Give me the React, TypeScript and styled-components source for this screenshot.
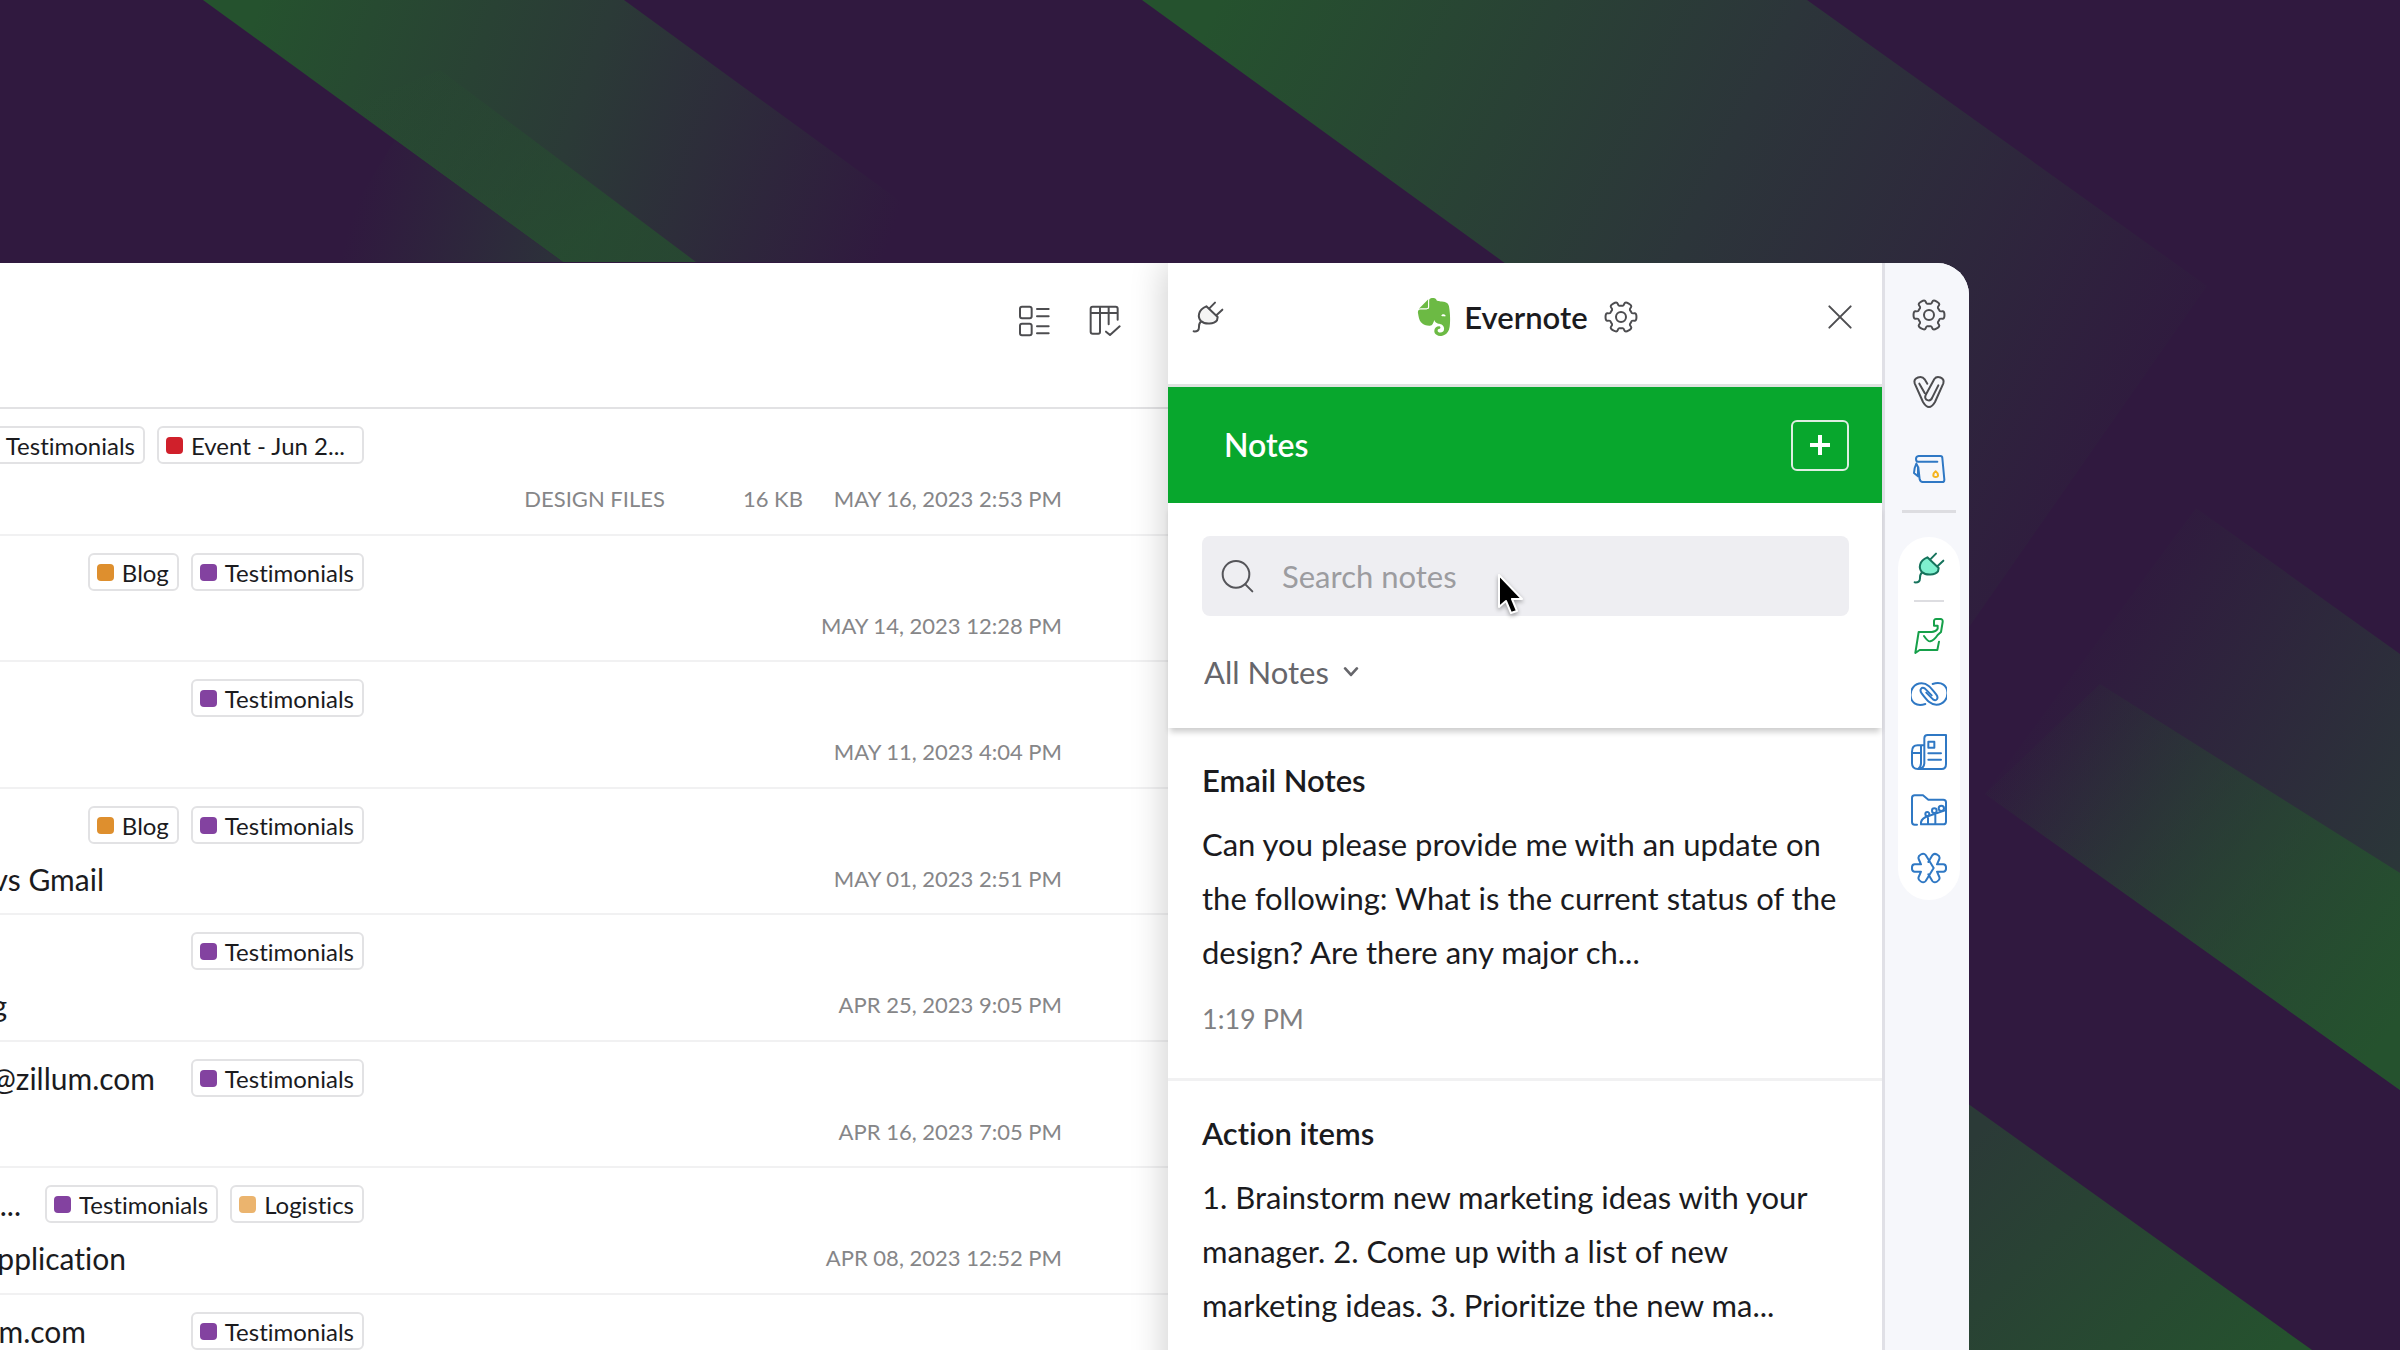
import React from 'react';
import styled, { createGlobalStyle } from 'styled-components';
import { SiEvernote } from 'react-icons/si';

const GlobalStyle = createGlobalStyle`
  *, *::before, *::after { box-sizing: border-box; }
  body {
    margin: 0;
    background: #30193f;
    font-variant-ligatures: none;
  }
  body, button, input, select {
    font-family: Lato, "Open Sans", sans-serif;
  }
`;

/* ---------- page frame ---------- */

const Page = styled.div`
  position: relative;
  height: 100vh;
  display: flex;
  padding: 263px 431px 0 0;
  overflow: hidden;
  color: #1b1b1e;
`;

const Backdrop = styled.svg`
  position: absolute;
  inset: 0;
  width: 100%;
  height: 100%;
`;

const AppWindow = styled.main`
  position: relative;
  flex: 1;
  min-width: 0;
  display: grid;
  grid-template-columns: minmax(0, 1fr) 714px 87px;
  background: #fff;
  border-top-right-radius: 32px;
  overflow: hidden;
`;

const IconButton = styled.button`
  display: flex;
  align-items: center;
  justify-content: center;
  padding: 0;
  border: 0;
  background: none;
  color: #4d4d50;
  cursor: pointer;
`;

const Glyph = styled.svg`
  display: block;
  flex: none;
  fill: none;
  stroke: currentColor;
  stroke-width: 6px;
  stroke-linecap: round;
  stroke-linejoin: round;
`;

/* ---------- mail list ---------- */

const MailPane = styled.section`
  display: flex;
  flex-direction: column;
  min-width: 0;
`;

const MailToolbar = styled.header`
  display: flex;
  justify-content: flex-end;
  align-items: flex-start;
  gap: 35px;
  height: 146px;
  padding: 40px 45px 0 0;
  border-bottom: 2px solid #e2e2e4;
`;

const MailList = styled.ul`
  margin: 0;
  padding: 0;
  list-style: none;
`;

const MailRow = styled.li`
  display: flex;
  flex-direction: column;
  gap: 16px;
  height: 127px;
  padding-top: 17px;
  border-bottom: 2px solid #f1f1f2;

  &:nth-child(even) { height: 126px; }
`;

const MailLine = styled.div`
  display: flex;
  align-items: center;
  justify-content: space-between;
  height: 38px;
`;

const LabelLine = styled(MailLine)`
  width: 364px;
`;

const MailText = styled.span<{ $end?: number }>`
  display: flex;
  flex: none;
  justify-content: flex-end;
  width: ${(p) => p.$end ?? 0}px;
  white-space: nowrap;
  font-size: 30px;
  line-height: 38px;
`;

const Labels = styled.div`
  display: flex;
  flex: 1;
  justify-content: flex-end;
  gap: 12px;
  min-width: 0;
`;

const Label = styled.span`
  display: flex;
  flex: none;
  align-items: center;
  gap: 8px;
  height: 38px;
  padding: 0 8px 0 7px;
  border: 2px solid #e2e2e4;
  border-radius: 6px;
  white-space: nowrap;
  font-size: 24px;
`;

const WideLabel = styled(Label)`
  padding-right: 17px;
`;

const Swatch = styled.i<{ $color: string }>`
  width: 17px;
  height: 17px;
  border-radius: 4px;
  background: ${(p) => p.$color};
`;

const Meta = styled.div`
  display: flex;
  justify-content: flex-end;
  padding-right: 106px;
  white-space: nowrap;
  font-size: 22px;
  line-height: 38px;
  color: #868688;
`;

const Folder = styled.span`
  margin-right: 78px;
`;

const Size = styled.span`
  margin-right: 31px;
`;

/* ---------- notes panel ---------- */

const Panel = styled.aside`
  display: flex;
  flex-direction: column;
  min-width: 0;
  background: #fff;
  box-shadow: -4px 0 32px rgba(0, 0, 0, 0.18);
`;

const PanelHeader = styled.header`
  display: flex;
  align-items: center;
  justify-content: space-between;
  height: 124px;
  padding: 0 24px 13px 22px;
  border-bottom: 3px solid #dfe3e0;
`;

const PanelTitle = styled.div`
  display: flex;
  align-items: center;
  gap: 11px;
  padding-left: 6px;
`;

const AppName = styled.h1`
  margin: 0;
  padding-right: 4px;
  font-size: 31px;
  font-weight: 600;
  line-height: 40px;
`;

const NotesBar = styled.div`
  display: flex;
  align-items: center;
  justify-content: space-between;
  height: 116px;
  padding: 0 33px 0 56px;
  background: #08a72d;
  color: #fff;
`;

const BarTitle = styled.h2`
  margin: 0;
  font-size: 32px;
  font-weight: 600;
  line-height: 40px;
`;

const AddButton = styled(IconButton)`
  width: 58px;
  height: 51px;
  border: 2px solid #dfeee2;
  border-radius: 6px;
  color: #fff;
`;

const Filters = styled.div`
  position: relative;
  display: flex;
  flex-direction: column;
  align-items: flex-start;
  gap: 36px;
  height: 225px;
  padding: 33px 33px 0 34px;
  background: #fff;
  box-shadow: 0 6px 6px -2px rgba(0, 0, 0, 0.2);
`;

const SearchBox = styled.label`
  position: relative;
  display: flex;
  align-items: center;
  gap: 26px;
  width: 100%;
  height: 80px;
  padding: 0 18px;
  border-radius: 8px;
  background: #eeeef2;
  color: #55555a;
`;

const SearchInput = styled.input`
  flex: 1;
  min-width: 0;
  padding: 0;
  border: 0;
  outline: 0;
  background: none;
  font-size: 31px;
  line-height: 40px;
  color: #1b1b1e;

  &::placeholder { color: #9c9ca0; opacity: 1; }
`;

const Pointer = styled.svg`
  position: absolute;
  left: 294px;
  top: 37px;
  width: 30px;
  height: 44px;
  filter: drop-shadow(0 2px 2px rgba(0, 0, 0, 0.35));
`;

const FilterSelect = styled.label`
  display: flex;
  align-items: center;
  gap: 12px;
  color: #66666b;
`;

const Select = styled.select`
  appearance: none;
  field-sizing: content;
  padding: 0 2px;
  border: 0;
  background: none;
  font-size: 31px;
  line-height: 40px;
  color: inherit;
`;

const Note = styled.article`
  padding: 32px 34px 41px;
  border-bottom: 3px solid #f1f1f2;
`;

const NoteTitle = styled.h3`
  margin: 0 0 17px;
  font-size: 31px;
  font-weight: 600;
  line-height: 40px;
`;

const NoteText = styled.p`
  margin: 0;
  font-size: 31px;
  line-height: 54px;
`;

const NoteTime = styled.time`
  display: block;
  margin-top: 22px;
  font-size: 27px;
  line-height: 36px;
  color: #7f7f82;
`;

/* ---------- app rail ---------- */

const Rail = styled.nav`
  display: flex;
  flex-direction: column;
  align-items: center;
  padding: 34px 0 0 4px;
  border-left: 3px solid #e0e0e6;
  background: #f6f7fb;
`;

const RailGroup = styled.div`
  display: flex;
  flex-direction: column;
  gap: 41px;
`;

const RailRule = styled.hr<{ $width: number }>`
  width: ${(p) => p.$width}px;
  height: ${(p) => (p.$width > 40 ? 3 : 2)}px;
  margin: 0;
  border: 0;
  background: #dddde1;
`;

const RailButton = styled(IconButton)<{ $color?: string }>`
  width: 40px;
  height: 36px;
  color: ${(p) => p.$color ?? '#4d4d50'};
`;

const Pill = styled.div`
  display: flex;
  flex-direction: column;
  align-items: center;
  width: 62px;
  margin-top: 24px;
  padding: 13px 0 14px;
  border-radius: 31px;
  background: #fff;
`;

const RailTop = styled(RailGroup)`
  margin-bottom: 23px;
`;

const PillGroup = styled(RailGroup)`
  gap: 22px;
  margin-top: 16px;
`;

const PlugSlot = styled.div`
  margin-bottom: 14px;
`;

/* ---------- icons, drawn around a centre of 0,0 ---------- */

const Icon = ({ size = 36, children }: { size?: number; children: React.ReactNode }) => (
  <Glyph width={size} height={size} viewBox="-54 -54 108 108" aria-hidden="true">
    {children}
  </Glyph>
);

const gearPath = (() => {
  const pts: [number, number][] = [];
  for (let k = 0; k < 6; k++) {
    [[34, -24], [35, -17], [48, -15], [48, 15], [35, 17], [34, 24]].forEach(([r, a]) => {
      const t = ((k * 60 + a) * Math.PI) / 180;
      pts.push([r * Math.cos(t), r * Math.sin(t)]);
    });
  }
  const mid = (a: number[], b: number[]) =>
    `${((a[0] + b[0]) / 2).toFixed(1)} ${((a[1] + b[1]) / 2).toFixed(1)}`;
  let d = `M${mid(pts[pts.length - 1], pts[0])}`;
  pts.forEach((p, i) => {
    d += ` Q${p[0].toFixed(1)} ${p[1].toFixed(1)} ${mid(p, pts[(i + 1) % pts.length])}`;
  });
  return `${d}Z`;
})();

const Gear = () => (
  <Icon>
    <path d={gearPath} />
    <circle r="15" />
  </Icon>
);

const Plug = ({ fill = '#f4f4f4' }: { fill?: string }) => (
  <Icon>
    <path d="M-43 43C-32 44-27 40-27 31C-27 22-28 18-20 13" />
    <path fill={fill} d="M-5-32C-30-22-32 0-21 12C-8 24 18 21 27 10L29 0Z" />
    <path d="M4-26L21-43M26-6L43-22" />
  </Icon>
);

const Vee = () => (
  <Icon>
    <path d="M-5-25L-13-38C-22-51-48-44-43-26L-18 30Q0 60 18 30L43-26C48-44 24-50 16-39L-10 9C-17 25 4 32 10 16L28-20M-29-25L-13 3" />
  </Icon>
);

const Wallet = () => (
  <Icon>
    <path d="M25-22H-33Q-39-22-39-30T-31-39H34Q40-39 40-33L46 32Q46 39 40 39H-19Q-26 39-28 31L-32-5M-38-16Q-45-2-45 12L-33 22V-6Z" />
    <path stroke="#f5b41f" d="M20 7C10 15 11 24 20 24C29 24 30 15 20 7Z" />
  </Icon>
);

const PhoneBag = () => (
  <Icon>
    <path d="M-15 0C-7 12-1 17 4 16C14 14 20 6 26-3L36-12L41-42Q42-51 34-51H22Q14-51 15-42V-31H26V-22Q20-12 8-12H-31L-41 51L-28 42H25L30 17" />
  </Icon>
);

const Rings = () => (
  <Icon>
    <path d="M-11 30C-68 48-68-32-22-32C-6-32 4-22 22 2C30 13 22 23 12 16L-8-4" />
    <path d="M11-30C68-48 68 32 22 32C6 32-4 22-22-2C-30-13-22-23-12-16L8 4" />
  </Icon>
);

const News = () => (
  <Icon>
    <path d="M-14-41Q-14-51-4-51H51V36Q51 51 38 51H-33Q-51 51-51 34V-1Q-51-20-34-20H-16M-14-41V34Q-15 50-33 51Q-24 46-24 34V-20M-51 3H-24" />
    <path d="M-2-31H16V-13H-2ZM-2 4H36M-2 23H36" />
  </Icon>
);

const FolderChart = () => (
  <Icon>
    <path d="M-36 44H-43Q-51 44-51 36V-36Q-51-44-43-44H-18L-2-31H43Q51-31 51-23V35Q51 43 43 43H-24Q-26 29-10 21L48 1M-3 24V43M19 16V43" />
    <circle cx="-5" cy="12" r="6" />
    <circle cx="16" cy="2" r="7" />
    <circle cx="37" cy="-5" r="8" />
  </Icon>
);

const Asterisk = () => (
  <Icon>
    <path d="M14 0L-10-39C-17-48-35-38-31-27L-24-11H-43C-54-11-54 11-43 11H-24L-31 27C-35 38-17 48-10 39L14 0" />
    <path d="M-2-18L10-38C17-48 35-38 31-27L24-11H43C54-11 54 11 43 11H24L31 27C35 38 17 48 10 39L-2 19" />
  </Icon>
);

const Cross = () => (
  <Icon>
    <path d="M-32-32L32 32M32-32L-32 32" />
  </Icon>
);

const ListView = () => (
  <Icon>
    <rect x="-42" y="-43" width="35" height="35" rx="6" />
    <rect x="-42" y="8" width="35" height="35" rx="6" />
    <path d="M9-36H44M9-14H44M9 16H44M9 37H44" />
  </Icon>
);

const TableCheck = () => (
  <Icon>
    <path d="M38-4V-37Q38-43 32-43H-37Q-43-43-43-37V32Q-43 38-37 38H-20Q-15 38-15 32V-43M-43-24H38M11-43V10M3 32L15 42L44 16" />
  </Icon>
);

const Magnifier = () => (
  <Icon>
    <circle cx="-6" cy="-5" r="40" />
    <path d="M22 25L43 46" />
  </Icon>
);

const PlusSign = () => (
  <Glyph width="20" height="20" viewBox="0 0 20 20" aria-hidden="true">
    <path strokeWidth="4" strokeLinecap="butt" d="M10 0V20M0 10H20" />
  </Glyph>
);

const Chevron = () => (
  <Glyph width="16" height="10" viewBox="-3 -3 54 34" aria-hidden="true">
    <path strokeWidth="9" d="M4 2L24 24L44 2" />
  </Glyph>
);

/* ---------- data ---------- */

const BLUE = '#2f78c4';
const testimonials = { text: 'Testimonials', color: '#8342a0' };
const blog = { text: 'Blog', color: '#de8f2e' };

type Mail = {
  labels: { text: string; color: string; wide?: boolean }[];
  date: string;
  from?: string;
  fromEnd?: number;
  subject?: string;
  subjectEnd?: number;
  folder?: string;
  size?: string;
};

const mails: Mail[] = [
  {
    labels: [testimonials, { text: 'Event - Jun 2...', color: '#d0202b', wide: true }],
    date: 'MAY 16, 2023 2:53 PM',
    folder: 'DESIGN FILES',
    size: '16 KB',
  },
  { labels: [blog, testimonials], date: 'MAY 14, 2023 12:28 PM' },
  { labels: [testimonials], date: 'MAY 11, 2023 4:04 PM' },
  { labels: [blog, testimonials], date: 'MAY 01, 2023 2:51 PM', subject: 'vs Gmail', subjectEnd: 104 },
  { labels: [testimonials], date: 'APR 25, 2023 9:05 PM', subject: 'g', subjectEnd: 7 },
  { labels: [testimonials], date: 'APR 16, 2023 7:05 PM', from: '@zillum.com', fromEnd: 155 },
  {
    labels: [testimonials, { text: 'Logistics', color: '#ebb46e' }],
    date: 'APR 08, 2023 12:52 PM',
    from: '...',
    fromEnd: 21,
    subject: 'pplication',
    subjectEnd: 126,
  },
  { labels: [testimonials], date: '', from: 'm.com', fromEnd: 86 },
];

const notes = [
  {
    title: 'Email Notes',
    text: 'Can you please provide me with an update on the following: What is the current status of the design? Are there any major ch...',
    time: '1:19 PM',
  },
  {
    title: 'Action items',
    text: '1. Brainstorm new marketing ideas with your manager. 2. Come up with a list of new marketing ideas. 3. Prioritize the new ma...',
  },
];

export default function App() {
  return (
    <Page>
      <GlobalStyle />
      <Backdrop viewBox="0 0 2400 1350" preserveAspectRatio="xMidYMid slice" aria-hidden="true">
        <defs>
          <linearGradient id="bandLeft" gradientUnits="userSpaceOnUse" x1="260" y1="0" x2="900" y2="210">
            <stop offset="0" stopColor="#25522e" />
            <stop offset="0.5" stopColor="#2b3a37" />
            <stop offset="1" stopColor="#30193f" />
          </linearGradient>
          <linearGradient id="bandLeftInner" gradientUnits="userSpaceOnUse" x1="420" y1="40" x2="580" y2="242">
            <stop offset="0" stopColor="#25522e" stopOpacity="0" />
            <stop offset="1" stopColor="#25522e" stopOpacity="0.7" />
          </linearGradient>
          <linearGradient id="foldLeft" gradientUnits="userSpaceOnUse" x1="560" y1="250" x2="360" y2="190">
            <stop offset="0" stopColor="#2c313a" />
            <stop offset="1" stopColor="#30193f" />
          </linearGradient>
          <linearGradient id="bandMid" gradientUnits="userSpaceOnUse" x1="1220" y1="0" x2="2160" y2="460">
            <stop offset="0" stopColor="#25522e" />
            <stop offset="0.5" stopColor="#2c353a" />
            <stop offset="1" stopColor="#30193f" />
          </linearGradient>
          <linearGradient id="bandRight" gradientUnits="userSpaceOnUse" x1="2400" y1="1020" x2="2020" y2="720">
            <stop offset="0" stopColor="#25522e" />
            <stop offset="1" stopColor="#25522e" stopOpacity="0" />
          </linearGradient>
          <linearGradient id="bandRightSoft" gradientUnits="userSpaceOnUse" x1="2460" y1="900" x2="2070" y2="640">
            <stop offset="0" stopColor="#2a3c38" />
            <stop offset="1" stopColor="#30193f" />
          </linearGradient>
          <linearGradient id="bandBottom" gradientUnits="userSpaceOnUse" x1="1980" y1="1130" x2="2240" y2="1390">
            <stop offset="0" stopColor="#2b3a37" />
            <stop offset="1" stopColor="#25522e" />
          </linearGradient>
        </defs>
        <path fill="url(#bandLeft)" d="M203 0H624L984 262H563Z" />
        <path fill="url(#bandLeftInner)" d="M440 70L696 262H563L350 107Z" />
        <path fill="url(#foldLeft)" d="M395 140L563 262H320Z" />
        <path fill="url(#bandMid)" d="M1142 0H1807L2207 286L1960 640V593Z" />
        <path fill="url(#bandRightSoft)" d="M2196 508L2400 654V1090L1985 794Z" />
        <path fill="url(#bandRight)" d="M2100 684L2400 873V1090L1985 794Z" />
        <path fill="url(#bandBottom)" d="M1960 1098L2312 1350H1960Z" />
      </Backdrop>

      <AppWindow>
        <MailPane>
          <MailToolbar>
            <IconButton aria-label="List view"><ListView /></IconButton>
            <IconButton aria-label="Columns"><TableCheck /></IconButton>
          </MailToolbar>
          <MailList>
            {mails.map((mail, i) => (
              <MailRow key={i}>
                <LabelLine>
                  {mail.from && <MailText $end={mail.fromEnd}>{mail.from}</MailText>}
                  <Labels>
                    {mail.labels.map((label) => {
                      const Tag = label.wide ? WideLabel : Label;
                      return (
                        <Tag key={label.text}>
                          <Swatch $color={label.color} />
                          {label.text}
                        </Tag>
                      );
                    })}
                  </Labels>
                </LabelLine>
                <MailLine>
                  <MailText $end={mail.subjectEnd}>{mail.subject}</MailText>
                  <Meta>
                    {mail.folder && <Folder>{mail.folder}</Folder>}
                    {mail.size && <Size>{mail.size}</Size>}
                    <time>{mail.date}</time>
                  </Meta>
                </MailLine>
              </MailRow>
            ))}
          </MailList>
        </MailPane>

        <Panel>
          <PanelHeader>
            <IconButton aria-label="Integrations"><Plug /></IconButton>
            <PanelTitle>
              <SiEvernote size={38} color="#6cba44" aria-hidden="true" />
              <AppName>Evernote</AppName>
              <IconButton aria-label="Evernote settings"><Gear /></IconButton>
            </PanelTitle>
            <IconButton aria-label="Close"><Cross /></IconButton>
          </PanelHeader>
          <NotesBar>
            <BarTitle>Notes</BarTitle>
            <AddButton aria-label="Add note"><PlusSign /></AddButton>
          </NotesBar>
          <Filters>
            <SearchBox>
              <Magnifier />
              <SearchInput type="text" placeholder="Search notes" aria-label="Search notes" />
              <Pointer viewBox="0 0 30 44" aria-hidden="true">
                <path
                  fill="#000"
                  stroke="#fff"
                  strokeWidth="2"
                  strokeLinejoin="round"
                  d="M3 2V34L10 28L15 40L21 38L16 26H26Z"
                />
              </Pointer>
            </SearchBox>
            <FilterSelect>
              <Select aria-label="Notebook" defaultValue="all">
                <option value="all">All Notes</option>
              </Select>
              <Chevron />
            </FilterSelect>
          </Filters>
          {notes.map((note) => (
            <Note key={note.title}>
              <NoteTitle>{note.title}</NoteTitle>
              <NoteText>{note.text}</NoteText>
              {note.time && <NoteTime>{note.time}</NoteTime>}
            </Note>
          ))}
        </Panel>

        <Rail aria-label="Apps">
          <RailTop>
            <RailButton aria-label="Settings"><Gear /></RailButton>
            <RailButton aria-label="Vault"><Vee /></RailButton>
            <RailButton aria-label="Wallet" $color={BLUE}><Wallet /></RailButton>
          </RailTop>
          <RailRule $width={54} />
          <Pill>
            <PlugSlot>
              <RailButton aria-label="Plugins" $color="#16735c"><Plug fill="#7ff0cf" /></RailButton>
            </PlugSlot>
            <RailRule $width={30} />
            <PillGroup>
              <RailButton aria-label="Desk" $color="#16a04a"><PhoneBag /></RailButton>
              <RailButton aria-label="CRM" $color={BLUE}><Rings /></RailButton>
              <RailButton aria-label="Newsfeed" $color={BLUE}><News /></RailButton>
              <RailButton aria-label="Projects" $color={BLUE}><FolderChart /></RailButton>
              <RailButton aria-label="Connect" $color={BLUE}><Asterisk /></RailButton>
            </PillGroup>
          </Pill>
        </Rail>
      </AppWindow>
    </Page>
  );
}
